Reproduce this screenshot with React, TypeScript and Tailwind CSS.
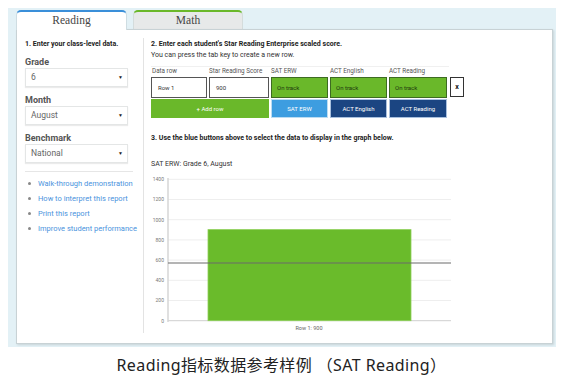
import React from "react";

const gridVals = [1400, 1200, 1000, 800, 600, 400, 200, 0];
const yOf = (v: number) => 150.7 - v * 0.101;

function Select({ value }: { value: string }) {
  return (
    <div className="mt-[1px] h-[19px] w-[103px] border border-[#e4e6e6] shadow-[0_1px_1px_rgba(0,0,0,0.08)] flex items-center justify-between pl-[5px] pr-[4px] text-[8.5px] text-[#666]">
      <span>{value}</span>
      <span className="text-[5px] text-[#222]">▼</span>
    </div>
  );
}

function Label({ text }: { text: string }) {
  return <div className="mt-[8px] h-[10px] leading-[10px] text-[9px] font-bold text-[#555]">{text}</div>;
}

export default function App() {
  const links = [
    "Walk-through demonstration",
    "How to interpret this report",
    "Print this report",
    "Improve student performance",
  ];
  return (
    <div className="w-[569px] h-[385px] bg-white font-['Roboto',sans-serif] overflow-hidden">
      <div className="ml-[8px] mt-[8px] w-[548px] h-[339px] bg-[#e3f1f6] pl-[8px] pr-[3px] pt-[2px] flex flex-col">
        <div className="flex gap-[6px] h-[19px] font-['Liberation_Serif',serif] text-[11.5px] text-[#444]">
          <div className="w-[111px] h-[20px] bg-white border-t-2 border-x border-[#3a8fd9] border-x-[#cfdde2] rounded-t-[5px] flex items-center justify-center relative z-10">
            Reading
          </div>
          <div className="w-[110px] h-[19px] bg-[#e7e9e9] border-t-2 border-x border-[#6ab82a] border-x-[#d4dcdc] rounded-t-[5px] flex items-center justify-center">
            Math
          </div>
        </div>
        <div className="w-[537px] h-[315px] bg-white border border-[#c8d2d5] shadow-[1px_1px_2px_rgba(0,0,0,0.12)] flex">
          {/* left column */}
          <div className="w-[127px] mt-[8px] mb-[10px] border-r border-[#e3e3e3] pl-[8px] flex flex-col">
            <div className="mt-[2px] h-[9px] leading-[9px] text-[7px] font-bold text-[#222]">1. Enter your class-level data.</div>
            <Label text="Grade" />
            <Select value="6" />
            <Label text="Month" />
            <Select value="August" />
            <Label text="Benchmark" />
            <Select value="National" />
            <div className="mt-[8px] w-[108px] border-t border-[#e6e6e6]" />
            <ul className="mt-[4px] flex flex-col">
              {links.map((l) => (
                <li key={l} className="h-[15px] flex items-center text-[7.5px] text-[#4a93dd]">
                  <span className="w-[13px] pl-[3px] flex items-center">
                    <span className="block w-[2.5px] h-[2.5px] rounded-full bg-[#888]" />
                  </span>
                  <span>{l}</span>
                </li>
              ))}
            </ul>
          </div>
          {/* right column */}
          <div className="flex-1 pl-[7px] pt-[9px] flex flex-col">
            <div className="h-[11px] leading-[11px] text-[7px] font-bold text-[#222]">2. Enter each student's Star Reading Enterprise scaled score.</div>
            <div className="h-[11px] leading-[11px] text-[7px] text-[#333]">You can press the tab key to create a new row.</div>
            <div className="mt-[5px] flex gap-[2px] h-[10px] items-center text-[6.3px] text-[#555] w-[298px] border-t border-[#f0f0f0]">
              <div className="w-[56px] pl-[1px]">Data row</div>
              <div className="w-[60px]">Star Reading Score</div>
              <div className="w-[57px]">SAT ERW</div>
              <div className="w-[57px]">ACT English</div>
              <div className="w-[58px]">ACT Reading</div>
            </div>
            <div className="mt-[1px] flex h-[21px] text-[6px]">
              <div className="w-[56px] border-[1.5px] border-[#555] flex items-center pl-[6px] text-[#333]">Row 1</div>
              <div className="ml-[2px] w-[60px] border-[1.5px] border-[#555] flex items-center pl-[6px] text-[#333]">900</div>
              <div className="ml-[2px] w-[57px] bg-[#6ab82a] border-[1.5px] border-[#3d6b22] flex items-center pl-[5px] text-[#1f3a10]">On track</div>
              <div className="ml-[2px] w-[57px] bg-[#6ab82a] border-[1.5px] border-[#3d6b22] flex items-center pl-[5px] text-[#1f3a10]">On track</div>
              <div className="ml-[2px] w-[58px] bg-[#6ab82a] border-[1.5px] border-[#3d6b22] flex items-center pl-[5px] text-[#1f3a10]">On track</div>
              <div className="ml-[3px] w-[14px] h-[20px] border-[1.5px] border-[#333] bg-white flex items-center justify-center text-[7px] font-bold text-[#111]">x</div>
            </div>
            <div className="mt-[1px] flex h-[19px] text-[6px] text-white">
              <div className="w-[118px] bg-[#6ab82a] flex items-center justify-center">+ Add row</div>
              <div className="ml-[2px] w-[57px] bg-[#3d9de0] border border-[#bcdcf2] flex items-center justify-center">SAT ERW</div>
              <div className="ml-[2px] w-[57px] bg-[#1b4582] border border-[#a9c0de] flex items-center justify-center">ACT English</div>
              <div className="ml-[2px] w-[58px] bg-[#1b4582] border border-[#a9c0de] flex items-center justify-center">ACT Reading</div>
            </div>
            <div className="mt-[15px] h-[10px] leading-[10px] text-[7px] font-bold text-[#222]">3. Use the blue buttons above to select the data to display in the graph below.</div>
            <div className="mt-[16px] h-[10px] leading-[10px] text-[7px] text-[#333]">SAT ERW: Grade 6, August</div>
            <svg width="310" height="165" className="mt-[1px]" style={{ display: "block" }}>
              {gridVals.map((v) => (
                <g key={v}>
                  <line x1={17} x2={300} y1={yOf(v)} y2={yOf(v)} stroke={v === 0 ? "#cfcfcf" : "#eeeeee"} strokeWidth={1} />
                  <text x={13} y={yOf(v) + 1.8} textAnchor="end" fontSize={5} fill="#777" fontFamily="Roboto, sans-serif">{v}</text>
                </g>
              ))}
              <line x1={17} x2={17} y1={8} y2={152} stroke="#d6d6d6" strokeWidth={1.5} />
              <rect x={57} y={59.6} width={203} height={91.1} fill="#6abb2b" stroke="#8fd05a" strokeWidth={0.8} />
              <line x1={17} x2={300} y1={93} y2={93} stroke="#6b6b6b" strokeWidth={1.2} />
              <text x={158} y={160} textAnchor="middle" fontSize={5.5} fill="#666" fontFamily="Roboto, sans-serif">Row 1: 900</text>
            </svg>
          </div>
        </div>
      </div>
      <div className="mt-[8px] h-[20px] leading-[20px] text-center text-[16px] tracking-[0.4px] text-[#222] font-['Noto_Sans','Noto_Sans_CJK_SC',sans-serif] pr-[6px]">
        Reading指标数据参考样例 （SAT Reading）
      </div>
    </div>
  );
}
